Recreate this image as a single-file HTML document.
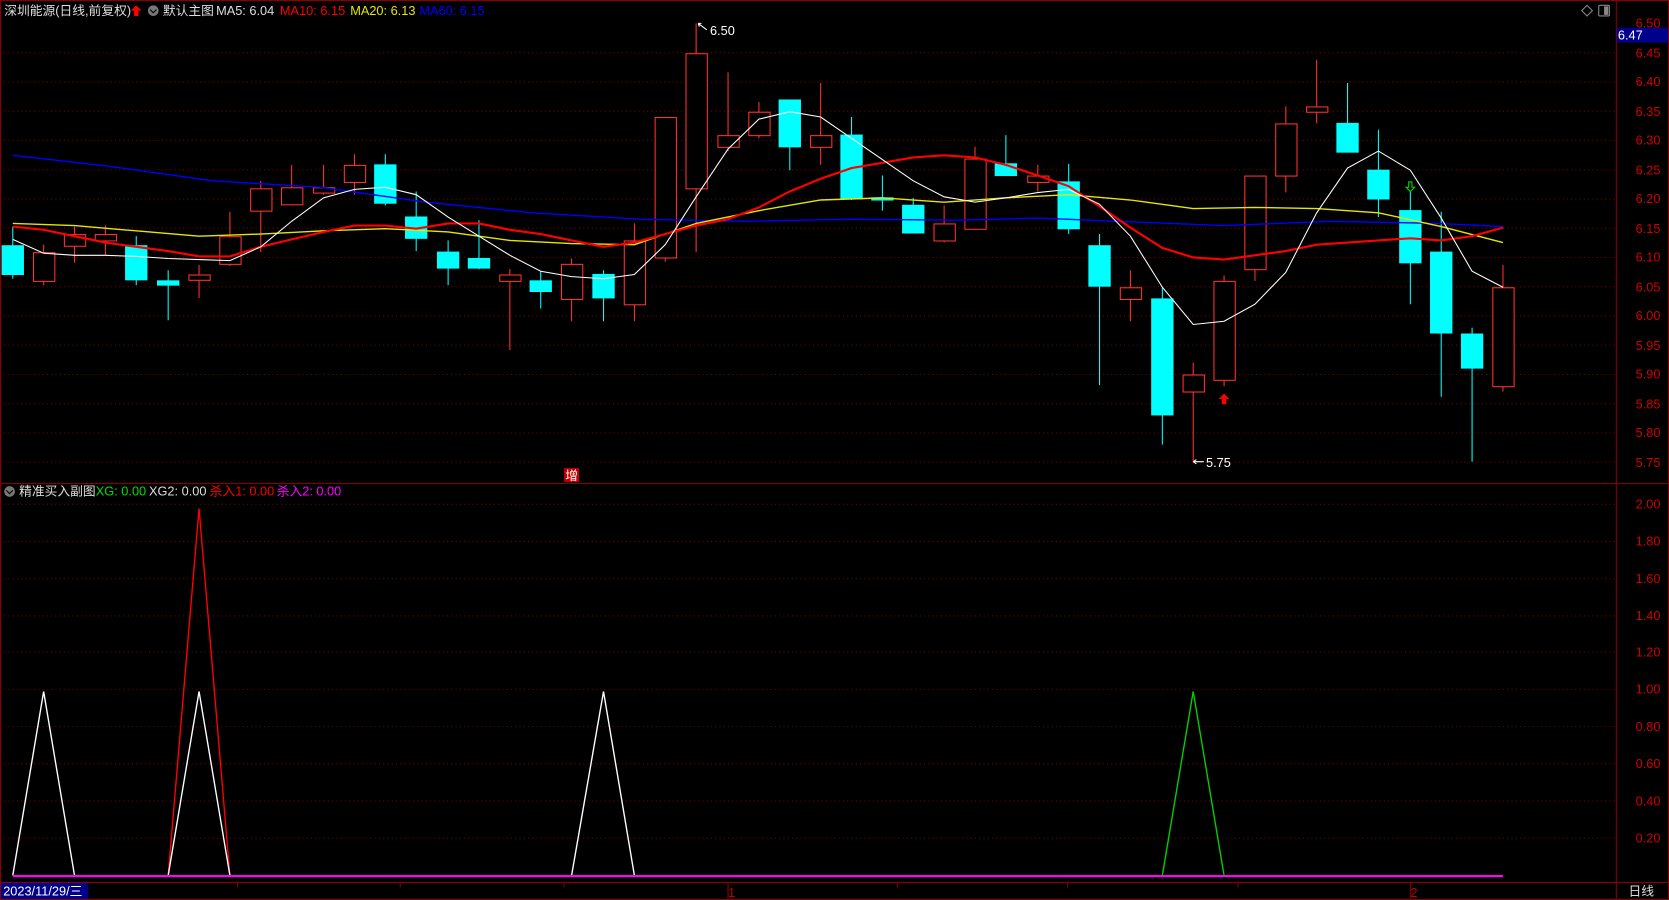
<!DOCTYPE html>
<html><head><meta charset="utf-8"><style>
html,body{margin:0;padding:0;background:#000;overflow:hidden}
svg{display:block}
text{font-family:"Liberation Sans","Noto Sans CJK SC",sans-serif;font-size:12px}
</style></head><body>
<svg width="1669" height="900" viewBox="0 0 1568 846" preserveAspectRatio="none" xmlns="http://www.w3.org/2000/svg">
<rect width="1568" height="846" fill="#000"/>
<g stroke="#8a0000" stroke-width="1" fill="none">
<rect x="0.5" y="0.5" width="1567" height="845"/>
<line x1="0" y1="454.5" x2="1568" y2="454.5"/>
<line x1="1518.5" y1="0" x2="1518.5" y2="846"/>
<line x1="0" y1="829.5" x2="1568" y2="829.5"/>
</g>
<g id="grid" stroke="#7a0000" stroke-dasharray="1,3" stroke-width="1">
<line x1="0" x2="1518" y1="49.5" y2="49.5"/><line x1="0" x2="1518" y1="77" y2="77"/><line x1="0" x2="1518" y1="104.5" y2="104.5"/><line x1="0" x2="1518" y1="132" y2="132"/><line x1="0" x2="1518" y1="159.5" y2="159.5"/><line x1="0" x2="1518" y1="187" y2="187"/><line x1="0" x2="1518" y1="214.5" y2="214.5"/><line x1="0" x2="1518" y1="242" y2="242"/><line x1="0" x2="1518" y1="269.5" y2="269.5"/><line x1="0" x2="1518" y1="297" y2="297"/><line x1="0" x2="1518" y1="324.5" y2="324.5"/><line x1="0" x2="1518" y1="352" y2="352"/><line x1="0" x2="1518" y1="379.5" y2="379.5"/><line x1="0" x2="1518" y1="407" y2="407"/><line x1="0" x2="1518" y1="434.5" y2="434.5"/>
<line x1="0" x2="1518" y1="474" y2="474"/><line x1="0" x2="1518" y1="509" y2="509"/><line x1="0" x2="1518" y1="544" y2="544"/><line x1="0" x2="1518" y1="579" y2="579"/><line x1="0" x2="1518" y1="613" y2="613"/><line x1="0" x2="1518" y1="648" y2="648"/><line x1="0" x2="1518" y1="683" y2="683"/><line x1="0" x2="1518" y1="718" y2="718"/><line x1="0" x2="1518" y1="753" y2="753"/><line x1="0" x2="1518" y1="788" y2="788"/>
</g>
<g fill="#d00000" text-anchor="end">
<text x="1560" y="26">6.50</text><text x="1560" y="54">6.45</text><text x="1560" y="81">6.40</text><text x="1560" y="109">6.35</text><text x="1560" y="136">6.30</text><text x="1560" y="164">6.25</text><text x="1560" y="191">6.20</text><text x="1560" y="219">6.15</text><text x="1560" y="246">6.10</text><text x="1560" y="274">6.05</text><text x="1560" y="301">6.00</text><text x="1560" y="329">5.95</text><text x="1560" y="356">5.90</text><text x="1560" y="384">5.85</text><text x="1560" y="411">5.80</text><text x="1560" y="439">5.75</text>
<text x="1560" y="478">2.00</text><text x="1560" y="513">1.80</text><text x="1560" y="548">1.60</text><text x="1560" y="583">1.40</text><text x="1560" y="617">1.20</text><text x="1560" y="652">1.00</text><text x="1560" y="687">0.80</text><text x="1560" y="722">0.60</text><text x="1560" y="757">0.40</text><text x="1560" y="792">0.20</text>
</g>
<rect x="1519" y="26" width="48" height="14" fill="#00008b"/>
<text x="1520" y="37" fill="#fff">6.47</text>
<rect x="1502" y="5" width="10" height="10" fill="none" stroke="#888" rx="1"/><rect x="1507" y="6" width="4" height="8" fill="#888"/>
<path d="M1491,5 l5,5 l-5,5 l-5,-5z" fill="none" stroke="#888"/>
<g stroke="#ff3030" fill="#000" stroke-width="1">
<path d="M41,230V268M70,213V247M99,212V240M187,249V280M216,199V250M245,170V237M274,155V193M304,155V183M333,145V183M479,253V329M537,243V302M596,210V302M625,110V246M654,22V237M684,68V142M713,96V130M771,78V155M887,193V228M916,138V216M975,155V180M1062,254V302M1121,341V434M1150,259V363M1179,165V264M1208,100V181M1237,56V116M1412,249V368"/>
<rect x="31.5" y="237.5" width="20" height="27"/><rect x="60.5" y="220.5" width="20" height="11"/><rect x="89.5" y="220.5" width="20" height="6"/><rect x="177.5" y="258.5" width="20" height="5"/><rect x="206.5" y="222.5" width="20" height="26"/><rect x="235.5" y="177.5" width="20" height="21"/><rect x="264.5" y="176.5" width="20" height="16"/><rect x="294.5" y="176.5" width="20" height="5"/><rect x="323.5" y="155.5" width="20" height="16"/><rect x="469.5" y="258.5" width="20" height="6"/><rect x="527.5" y="248.5" width="20" height="33"/><rect x="586.5" y="226.5" width="20" height="60"/><rect x="615.5" y="110.5" width="20" height="132"/><rect x="644.5" y="50.5" width="20" height="127"/><rect x="674.5" y="127.5" width="20" height="11"/><rect x="703.5" y="105.5" width="20" height="22"/><rect x="761.5" y="127.5" width="20" height="11"/><rect x="877.5" y="210.5" width="20" height="16"/><rect x="906.5" y="149.5" width="20" height="66"/><rect x="965.5" y="165.5" width="20" height="6"/><rect x="1052.5" y="270.5" width="20" height="11"/><rect x="1111.5" y="352.5" width="20" height="16"/><rect x="1140.5" y="264.5" width="20" height="93"/><rect x="1169.5" y="165.5" width="20" height="88"/><rect x="1198.5" y="116.5" width="20" height="49"/><rect x="1227.5" y="100.5" width="20" height="5"/><rect x="1402.5" y="270.5" width="20" height="93"/>
</g>
<g stroke="#00ffff" fill="#00ffff">
<path d="M12,213V262M128,222V268M158,254V301M362,145V193M391,180V236M421,226V268M450,207V253M508,255V290M567,254V302M742,94V160M800,110V188M829,165V198M858,186V219M945,127V165M1004,154V220M1033,220V362M1092,270V418M1266,78V143M1295,122V204M1325,180V286M1354,199V373M1383,308V434"/>
<rect x="2" y="231" width="20" height="27"/><rect x="118" y="231" width="20" height="32"/><rect x="148" y="264" width="20" height="4"/><rect x="352" y="155" width="20" height="36"/><rect x="381" y="204" width="20" height="20"/><rect x="411" y="237" width="20" height="15"/><rect x="440" y="243" width="20" height="9"/><rect x="498" y="264" width="20" height="10"/><rect x="557" y="258" width="20" height="22"/><rect x="732" y="94" width="20" height="44"/><rect x="790" y="127" width="20" height="60"/><rect x="819" y="186" width="20" height="2"/><rect x="848" y="193" width="20" height="26"/><rect x="935" y="154" width="20" height="11"/><rect x="994" y="171" width="20" height="44"/><rect x="1023" y="231" width="20" height="38"/><rect x="1082" y="281" width="20" height="109"/><rect x="1256" y="116" width="20" height="27"/><rect x="1285" y="160" width="20" height="27"/><rect x="1315" y="198" width="20" height="49"/><rect x="1344" y="237" width="20" height="76"/><rect x="1373" y="314" width="20" height="32"/>
</g>
<g fill="none" stroke-width="1.3">
<polyline stroke="#0000ff" points="12,146 100,156 200,170 300,176 400,190 500,200 600,206 700,208 800,206 900,207 975,205 1050,208 1150,212 1250,208 1350,210 1412,213"/>
<polyline stroke="#e6e600" points="12,210 70,212 128,217 187,222 245,220 304,217 362,215 421,218 479,226 537,229 596,230 654,210 713,198 771,188 829,186 887,190 945,186 1004,183 1062,188 1121,196 1179,195 1237,196 1295,200 1354,213 1412,228"/>
<polyline stroke="#ff0000" stroke-width="2" points="12,213 41,216 70,222 99,228 128,232 158,236 187,241 216,241 245,232 274,225 304,218 333,212 362,212 391,215 421,210 450,210 479,216 508,220 537,226 567,232 596,228 625,220 654,212 684,206 713,195 742,180 771,168 800,158 829,153 858,148 887,146 916,148 945,155 975,165 1004,175 1033,194 1062,214 1092,233 1121,242 1150,244 1179,240 1208,236 1237,230 1266,228 1295,226 1325,224 1354,226 1383,222 1412,214"/>
<polyline stroke="#ffffff" stroke-width="1" points="12,225 41,238 70,240 99,240 128,241 158,243 187,244 216,245 245,232 274,208 304,186 333,178 362,176 391,183 421,204 450,222 479,240 508,255 537,260 567,262 596,258 625,230 654,185 684,140 713,112 742,105 771,110 800,130 829,150 858,170 887,185 916,190 945,186 975,181 1004,178 1033,192 1062,222 1092,270 1121,305 1150,302 1179,286 1208,256 1237,200 1266,158 1295,142 1325,160 1354,205 1383,255 1412,270"/>
</g>
<text x="667" y="33" fill="#fff">6.50</text><path d="M664,28 l-8,-6 M656,22 l3,0 M656,22 l1,3" stroke="#fff" fill="none"/>
<text x="1133" y="439" fill="#fff">5.75</text><path d="M1121,434 h10 M1121,434 l3,-2 M1121,434 l3,2" stroke="#fff" fill="none"/>
<rect x="530" y="440" width="14" height="13" fill="#c00000"/><text x="531" y="451" fill="#fff" font-size="11">增</text>
<path d="M1150,370 l-5,5 h3 v5 h4 v-5 h3z" fill="#ff0000"/>
<path d="M1325,180 l-4,-4 h2.5 v-5 h3 v5 h2.5z" fill="none" stroke="#00e000"/>
<g fill="none" stroke-width="1.3">
<polyline stroke="#fff" points="12,823 41,650 70,823"/>
<polyline stroke="#ff0000" points="158,823 187,478 216,823"/>
<polyline stroke="#fff" points="158,823 187,650 216,823"/>
<polyline stroke="#fff" points="537,823 567,650 596,823"/>
<polyline stroke="#00d000" points="1092,823 1121,650 1150,823"/>
<line x1="12" y1="823.5" x2="1412" y2="823.5" stroke="#ff00ff" stroke-width="2"/>
</g>
<text x="4" y="14" fill="#ddd">深圳能源(日线,前复权)</text>
<path d="M128,5 l-5,5 h3 v5 h4 v-5 h3z" fill="#ff0000"/>
<circle cx="144" cy="10" r="5" fill="#777"/><path d="M141,9 l3,3 l3,-3" stroke="#000" fill="none"/>
<text x="153" y="14" fill="#ddd">默认主图</text>
<text x="203" y="14" fill="#ddd">MA5: 6.04</text>
<text x="263" y="14" fill="#ff0000">MA10: 6.15</text>
<text x="329" y="14" fill="#e6e600">MA20: 6.13</text>
<text x="394" y="14" fill="#0000ff">MA60: 6.15</text>
<circle cx="9" cy="462" r="5" fill="#777"/><path d="M6,461 l3,3 l3,-3" stroke="#000" fill="none"/>
<text x="18" y="466" fill="#ddd">精准买入副图</text>
<text x="90" y="466" fill="#00e000">XG: 0.00</text>
<text x="140" y="466" fill="#ddd">XG2: 0.00</text>
<text x="197" y="466" fill="#ff0000">杀入1: 0.00</text>
<text x="260" y="466" fill="#ff00ff">杀入2: 0.00</text>
<rect x="1" y="830" width="82" height="15" fill="#00008b"/>
<text x="3" y="842" fill="#fff">2023/11/29/三</text>
<g stroke="#8a0000"><path d="M223,830v4M376,830v4M530,830v4M843,830v4M1003,830v4M1163,830v4M684,830v15M1325,830v15"/></g>
<text x="684" y="843" fill="#c00000">1</text><text x="1325" y="843" fill="#c00000">2</text>
<text x="1530" y="842" fill="#ddd">日线</text>
</svg>
</body></html>
